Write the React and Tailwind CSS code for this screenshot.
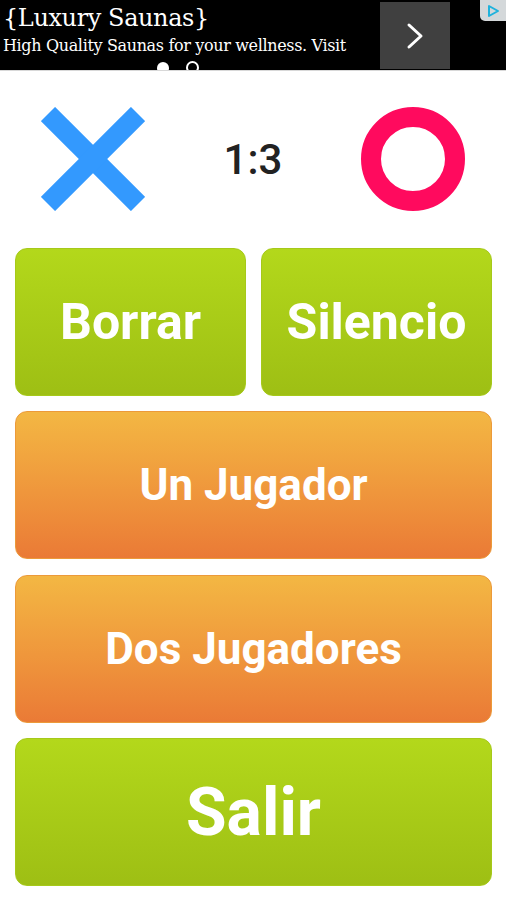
import React from "react";

function GreenBtn({ children, className = "", textClass = "" }) {
  return (
    <div
      className={`flex h-[148px] items-center justify-center rounded-[12px] border border-[#a6c91a] bg-gradient-to-b from-[#b3d81b] to-[#9ebf14] ${className}`}
    >
      <span className={`font-bold text-white ${textClass}`} style={{ fontFamily: "Roboto, 'Noto Sans', sans-serif" }}>
        {children}
      </span>
    </div>
  );
}

function OrangeBtn({ children, className = "" }) {
  return (
    <div className={`flex h-[148px] items-center justify-center rounded-[12px] border border-[#ec9a3a] bg-gradient-to-b from-[#f3b743] to-[#ea7a36] ${className}`}>
      <span className="text-[44px] font-bold text-white" style={{ fontFamily: "Roboto, 'Noto Sans', sans-serif" }}>
        {children}
      </span>
    </div>
  );
}

export default function App() {
  return (
    <div className="relative h-[900px] w-[506px] overflow-hidden bg-white">
      {/* Ad bar */}
      <div className="relative flex h-[70px] w-full items-stretch overflow-hidden bg-black">
        <div className="flex flex-col pl-[3px] pt-[1px]" style={{ fontFamily: "'DejaVu Serif', serif" }}>
          <div className="text-[24px] leading-[34px] text-white tracking-[-0.4px]">{"{Luxury Saunas}"}</div>
          <div className="text-[16px] leading-[21px] text-white tracking-[-0.35px]">High Quality Saunas for your wellness. Visit</div>
        </div>
        <div className="absolute left-[380px] top-[2px] flex h-[67px] w-[70px] items-center justify-center bg-[#404040]">
          <svg width="20" height="30" viewBox="0 0 20 30">
            <path d="M4 4 L16 15 L4 26" fill="none" stroke="white" strokeWidth="3" strokeLinecap="round" strokeLinejoin="round" />
          </svg>
        </div>
        <div className="absolute right-0 top-0 flex h-[21px] w-[26px] items-center justify-center rounded-bl-[5px] bg-[#d4d8da]">
          <svg width="14" height="14" viewBox="0 0 14 14">
            <path d="M3 2 L3 12 L12 7 Z" fill="none" stroke="#1fb2dc" strokeWidth="2" strokeLinejoin="round" />
          </svg>
        </div>
        <div className="absolute left-[157px] top-[62px] h-[12px] w-[12px] rounded-full bg-white" />
        <div className="absolute left-[186px] top-[61px] h-[13px] w-[13px] rounded-full border-[2px] border-white" />
      </div>
      <div className="h-[1px] w-full bg-[#d8d8d8]" />

      {/* Score row */}
      <div className="mt-[36px] flex h-[104px] items-center justify-between px-[41px]">
        <svg width="104" height="104" viewBox="0 0 104 104">
          <line x1="7" y1="7" x2="97" y2="97" stroke="#3399fe" strokeWidth="20" />
          <line x1="97" y1="7" x2="7" y2="97" stroke="#3399fe" strokeWidth="20" />
        </svg>
        <span
          className="text-[42px] font-medium text-[#222222]"
          style={{ fontFamily: "Roboto, 'Noto Sans', sans-serif" }}
        >
          1:3
        </span>
        <svg width="104" height="104" viewBox="0 0 104 104">
          <circle cx="52" cy="52" r="42" fill="none" stroke="#ff0a5e" strokeWidth="20" />
        </svg>
      </div>

      {/* Buttons */}
      <div className="mt-[37px] flex flex-col pl-[15px] pr-[14px]">
        <div className="grid grid-cols-2 gap-[15px]">
          <GreenBtn textClass="text-[50px]">Borrar</GreenBtn>
          <GreenBtn textClass="text-[50px]">Silencio</GreenBtn>
        </div>
        <OrangeBtn className="mt-[15px]">Un Jugador</OrangeBtn>
        <OrangeBtn className="mt-[16px]">Dos Jugadores</OrangeBtn>
        <GreenBtn className="mt-[15px]" textClass="text-[66px]">Salir</GreenBtn>
      </div>
    </div>
  );
}
